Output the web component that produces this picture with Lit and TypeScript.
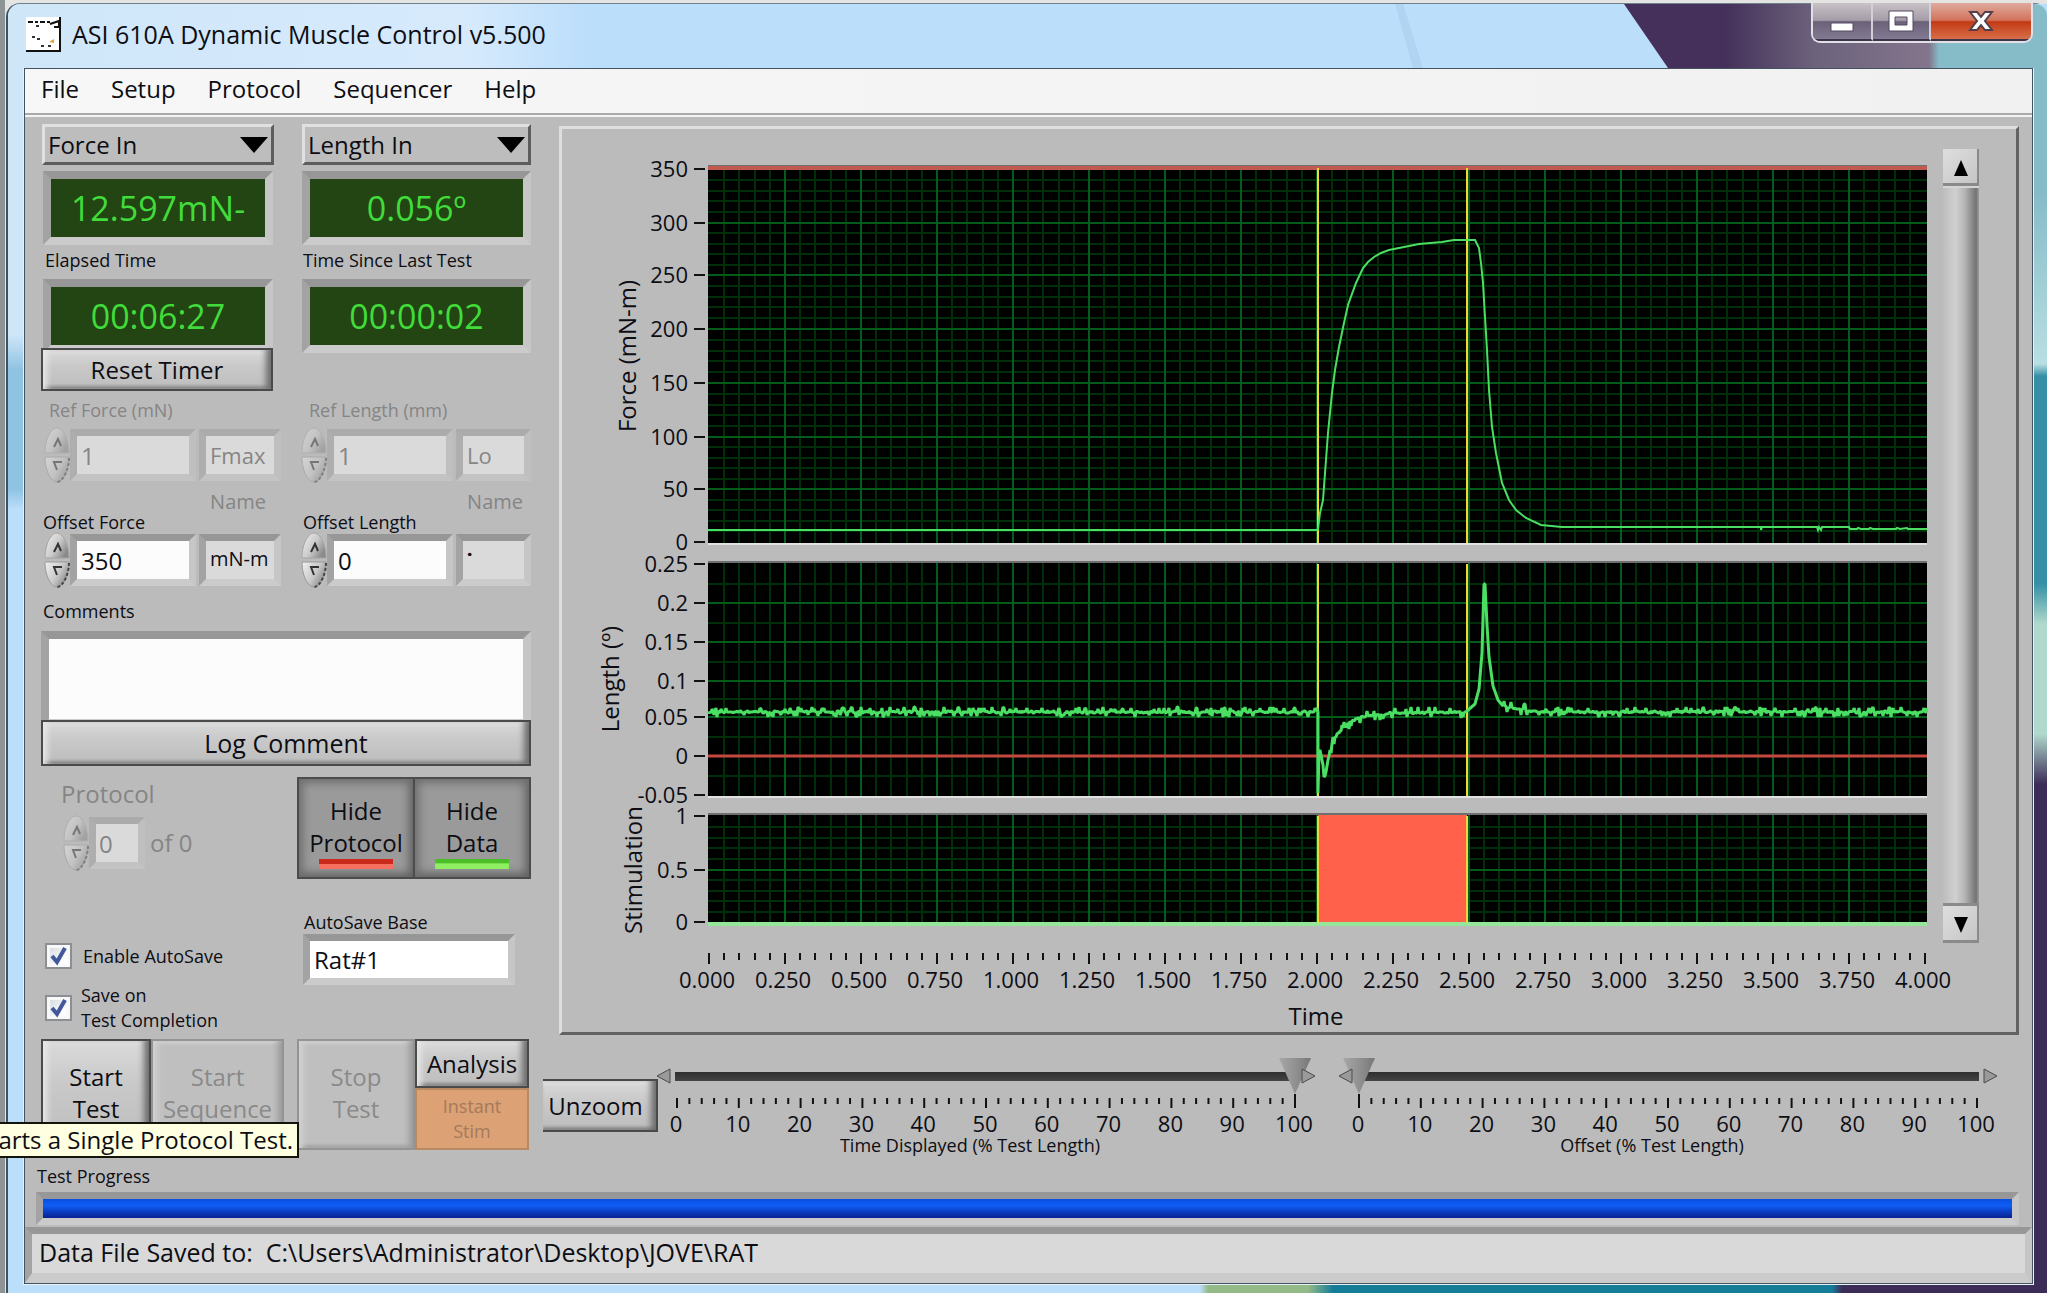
import { LitElement, html, svg, css } from "lit";
import { customElement, property } from "lit/decorators.js";

const range = (n: number) => Array.from({ length: n }, (_, i) => i);

/** Small repeatable generator used for the sensor noise on the traces. */
function noise(seed: number) {
  let s = seed;
  return () => {
    s = (s * 1103515245 + 12345) % 2147483648;
    return s / 2147483648;
  };
}

const PLOT_LEFT = 709;
const PLOT_RIGHT = 1928;
const BASE = 712;

const secondsToX = (t: number) => 710 + t * 304;

type Tick = { y: number; text?: string };
type Plot = { name: string; nameX: number; nameY: number; top: number; bottom: number; major: Tick[]; minor: number[] };

function between(ys: number[], parts: number) {
  const out: number[] = [];
  for (let i = 0; i < ys.length - 1; i++)
    for (let k = 1; k < parts; k++) out.push(Math.round(ys[i] + ((ys[i + 1] - ys[i]) * k) / parts));
  return out;
}

function plot(name: string, nameX: number, nameY: number, top: number, bottom: number, marks: [string, number][], parts: number): Plot {
  return {
    name, nameX, nameY, top, bottom,
    major: marks.map(([text, y]) => ({ text, y })),
    minor: between(marks.map(([, y]) => y), parts),
  };
}

const PLOTS: Plot[] = [
  plot("Force (mN-m)", 637, 356, 166, 543,
    [["350", 169], ["300", 223], ["250", 275], ["200", 329], ["150", 383], ["100", 437], ["50", 489], ["0", 542]], 5),
  plot("Length (º)", 620, 679, 562, 796,
    [["0.25", 564], ["0.2", 603], ["0.15", 642], ["0.1", 681], ["0.05", 717], ["0", 756], ["-0.05", 795]], 2),
  plot("Stimulation", 643, 870, 814, 923, [["1", 816], ["0.5", 870], ["0", 922]], 5),
];

const FORCE =
  "709,530 1318,530 1319,529 1321,513 1324,500 1329,433 1333,393 1336,370 1340,347 1345,323 1349,305 1357,283 1364,268 " +
  "1369,262 1375,257 1382,253 1390,250 1405,247 1420,244 1443,242 1455,240 1476,240 1480,248 1482,263 1484,283 1486,317 " +
  "1488,350 1490,390 1493,427 1497,453 1503,483 1510,500 1517,510 1527,518 1542,525 1563,527 1762,527 1762,530 1763,527 " +
  "1818,527 1819,530 1820,527 1822,530 1823,527 1850,527 1851,529 1858,529 1859,528 1862,529 1870,529 1871,528 1874,529 " +
  "1897,529 1898,528 1901,529 1908,528 1909,529 1928,529";

function lengthTrace() {
  const r = noise(7);
  const pts: string[] = [];
  const anchors: [number, number][] = [
    [1319, BASE], [1319, 793], [1320, 752], [1321, 750], [1323, 760], [1326, 776], [1331, 750], [1336, 737], [1344, 728],
    [1354, 720], [1367, 716], [1392, 713], [1466, BASE], [1468, 711], [1476, 704], [1480, 689], [1483, 653],
    [1485, 584], [1486, 584], [1488, 625], [1490, 657], [1494, 686], [1499, 700], [1504, 706], [1519, 709], [1540, BASE],
  ];
  const put = (x: number, y: number, amp: number) => {
    const v = r();
    pts.push(`${x},${Math.round(y + (v < 0.12 ? -1 : v > 0.88 ? 1 : 0) * amp + (r() - 0.5) * 2)}`);
  };
  for (let x = PLOT_LEFT; x < 1319; x += 1) put(x, BASE, 4);
  for (let i = 0; i < anchors.length - 1; i++) {
    const [x0, y0] = anchors[i];
    const [x1, y1] = anchors[i + 1];
    const amp = (x0 >= 1321 && x0 < 1466) || x0 >= 1504 ? 5 : 0;
    pts.push(`${x0},${y0}`);
    if (amp) for (let x = x0 + 1; x < x1; x++) put(x, y0 + ((y1 - y0) * (x - x0)) / (x1 - x0), amp);
  }
  for (let x = 1540; x <= PLOT_RIGHT; x += 1) put(x, BASE, 4);
  return pts.join(" ");
}

const LENGTH = lengthTrace();

@customElement("test-chart")
export class TestChart extends LitElement {
  static styles = css`
    :host { display: block; min-width: 0; }
    svg { display: block; width: 100%; height: auto; overflow: visible; font-family: "Open Sans", "Noto Sans", sans-serif; font-size: 22px; }
    text { fill: #0d0d14; }
    .name { font-size: 24px; text-anchor: middle; }
    .mid { text-anchor: middle; }
    .end { text-anchor: end; }
    .tick { stroke: #111; stroke-width: 2; }
    .minor { stroke: #002e08; stroke-width: 2; }
    .major { stroke: #045c1a; stroke-width: 2; }
    .edge { stroke: #e2e2e2; stroke-width: 2; }
    .shade { stroke: #6f6f6f; stroke-width: 2; }
    .limit { fill: #c05a50; }
    .zero { stroke: #c5483e; stroke-width: 3; }
    .trace { fill: none; stroke: #4ade62; stroke-width: 2; }
    .noisy { stroke-width: 3; stroke-linejoin: bevel; }
    .cursor { stroke: #f3d63c; stroke-width: 2; }
    .stim { fill: #ff614b; }
    .rest { fill: #96e69a; }
  `;

  private grid(p: Plot) {
    return svg`
      <rect x=${PLOT_LEFT} y=${p.top} width=${PLOT_RIGHT - PLOT_LEFT} height=${p.bottom - p.top}></rect>
      ${range(81).filter((i) => i % 5).map((i) => {
        const x = Math.round(secondsToX(i * 0.05));
        return svg`<line class="minor" x1=${x} x2=${x} y1=${p.top} y2=${p.bottom}></line>`;
      })}
      ${p.minor.map((y) => svg`<line class="minor" x1=${PLOT_LEFT} x2=${PLOT_RIGHT} y1=${y} y2=${y}></line>`)}
      ${range(15).map((i) => {
        const x = secondsToX((i + 1) * 0.25);
        return svg`<line class="major" x1=${x} x2=${x} y1=${p.top} y2=${p.bottom}></line>`;
      })}
      ${p.major.slice(1, -1).map((t) => svg`<line class="major" x1=${PLOT_LEFT} x2=${PLOT_RIGHT} y1=${t.y} y2=${t.y}></line>`)}
      ${p.major.map((t) => svg`
        <line class="tick" x1="695" x2="706" y1=${t.y} y2=${t.y}></line>
        <text class="end" x="689" y=${t.y + 8}>${t.text}</text>`)}
      <line class="shade" x1=${PLOT_LEFT} x2=${PLOT_RIGHT} y1=${p.top} y2=${p.top}></line>
      <line class="edge" x1=${PLOT_LEFT} x2=${PLOT_RIGHT} y1=${p.bottom + 1} y2=${p.bottom + 1}></line>
      <text class="name" transform="translate(${p.nameX} ${p.nameY}) rotate(-90)">${p.name}</text>
    `;
  }

  render() {
    return html`
      <svg viewBox="563 129 1380 903" role="img" aria-label="Force, Length and Stimulation against Time">
        ${PLOTS.map((p) => this.grid(p))}
        <rect class="limit" x="709" y="166" width="1219" height="4"></rect>
        <line class="zero" x1="709" x2="1928" y1="756" y2="756"></line>
        <rect class="stim" x="1319" y="815" width="149" height="107"></rect>
        <rect class="rest" x="709" y="922" width="1219" height="4"></rect>
        ${[1319, 1468].map((x) => PLOTS.map((p) => svg`<line class="cursor" x1=${x} x2=${x} y1=${p.top + 2} y2=${p.bottom}></line>`))}
        <polyline class="trace" points=${FORCE}></polyline>
        <polyline class="trace noisy" points=${LENGTH}></polyline>
        ${range(81).map((i) => {
          const x = Math.round(secondsToX(i * 0.05));
          return svg`<line class="tick" x1=${x} x2=${x} y1="953" y2=${i % 5 ? 960 : 964}></line>`;
        })}
        ${range(17).map((i) => svg`<text class="mid" x=${secondsToX(i * 0.25) - 2} y="988">${(i * 0.25).toFixed(3)}</text>`)}
        <text class="name" x="1317" y="1025">Time</text>
      </svg>
    `;
  }
}

@customElement("scale-slider")
export class ScaleSlider extends LitElement {
  @property() label = "";
  @property({ type: Number }) value = 0;

  static styles = css`
    :host { display: block; flex: 1; min-width: 0; color: #0d0d14; }
    .rail { position: relative; display: flex; align-items: center; padding: 0 5px; height: 36px; }
    input {
      appearance: none; flex: 1; min-width: 0; width: 100%; height: 36px; margin: 0; background: none;
    }
    input::-webkit-slider-runnable-track {
      height: 36px;
      background: linear-gradient(#2f2f2f, #444) center / calc(100% - 28px) 9px no-repeat;
    }
    input::-webkit-slider-thumb {
      appearance: none; width: 32px; height: 36px; border: 0;
      background: linear-gradient(90deg, #a8a8a8, #8c8c8c 60%, #777);
      clip-path: polygon(0 0, 100% 0, 50% 100%);
    }
    .end { position: absolute; top: 10px; width: 15px; height: 16px; }
    .start { left: 0; }
    .finish { right: 0; }
    .end path { fill: #9a9a9a; stroke: #4a4a4a; stroke-width: 1; }
    .ticks { display: block; width: calc(100% - 42px); height: 14px; margin: 0 21px; overflow: visible; stroke: #111; stroke-width: 2; }
    .numbers { display: flex; justify-content: space-between; margin: 3px 22px 0 20px; font-size: 22px; line-height: 24px; }
    .numbers span { display: flex; justify-content: center; width: 0; }
    label { display: block; padding-right: 32px; text-align: center; font-size: 18px; line-height: 20px; }
  `;

  render() {
    return html`
      <div class="rail">
        <input id="range" type="range" min="0" max="100" .value=${String(this.value)} />
        <svg class="end start" viewBox="0 0 15 16" aria-hidden="true"><path d="M14 1V15L1 8Z"></path></svg>
        <svg class="end finish" viewBox="0 0 15 16" aria-hidden="true"><path d="M1 1V15L14 8Z"></path></svg>
      </div>
      <svg class="ticks" aria-hidden="true">
        ${range(51).map((i) => svg`<line x1="${i * 2}%" x2="${i * 2}%" y1=${i === this.value / 2 ? 0 : 4} y2=${i % 5 ? 10 : 14}></line>`)}
      </svg>
      <div class="numbers">${range(11).map((i) => html`<span>${i * 10}</span>`)}</div>
      <label for="range">${this.label}</label>
    `;
  }
}

@customElement("app-root")
export class AppRoot extends LitElement {
  static styles = css`
    :host { display: block; color: #0d0d14; font-family: "Open Sans", "Noto Sans", sans-serif; font-size: 24px; line-height: 30px; }
    * { box-sizing: border-box; }
    button, input, select, textarea { font: inherit; color: inherit; margin: 0; border-radius: 0; }
    button { padding: 0; }

    .desktop { position: relative; overflow: hidden; min-height: 100vh; display: flex; flex-direction: column; padding: 3px 0 0 6px; background: linear-gradient(90deg, #8e9496 0 5px, #e4e5e3 5px); }
    .window {
      flex: 1; display: flex; flex-direction: column; padding: 0 14px 9px 16px;
      border-left: 2px solid #41525e; border-top: 1px solid #6f7f8b; border-radius: 14px 12px 0 0;
      background:
        linear-gradient(#86bcc8 0 190px, #b8dfe3 360px, #3590a6 372px 580px, #b0d8cc 620px 730px, #3c2d58 780px) right top / 14px 100% no-repeat,
        linear-gradient(90deg, #bbdefb 0 1192px, #94ba88 1200px 1300px, #167d98 1325px 1824px, #3c2d58 1834px) left bottom / 100% 10px no-repeat,
        linear-gradient(#cfe6f8 0 330px, #8fc3e2 366px 485px, #bbdefb 505px) left top / 18px 100% no-repeat,
        #bbdefb;
    }

    .titlebar { position: relative; display: flex; align-items: flex-start; height: 64px; margin: 0 -14px 0 -16px; padding-left: 18px; border-radius: 12px 0 0 0; background: linear-gradient(90deg, #cfe6f9, #d6eafc 460px, #bbdefb 580px); }
    .titlebar::before {
      content: ""; position: absolute; right: 0; top: 0; width: 423px; height: 64px; border-top-right-radius: 12px;
      background: linear-gradient(90deg, #44305a 0 100px, #6c627c 190px, #83758c 305px, #86bcc8 315px);
      clip-path: polygon(0 0, 100% 0, 100% 100%, 44px 100%);
    }
    .titlebar::after {
      content: ""; position: absolute; right: 624px; top: 0; width: 28px; height: 64px;
      background: #a9cdeb; opacity: 0.6; clip-path: polygon(0 0, 8px 0, 100% 100%, 18px 100%);
    }
    .appicon { width: 36px; height: 36px; margin: 13px 10px 0 0; }
    .title { margin: 0; font-size: 25px; font-weight: 400; line-height: 60px; }
    .caption { position: relative; z-index: 1; display: flex; margin: -1px 14px 0 auto; border: 2px solid #e3dfe6; border-top: 0; border-radius: 0 0 9px 9px; overflow: hidden; }
    .caption button { height: 38px; display: grid; place-items: center; border: 0; border-bottom: 2px solid #3c3448; border-right: 2px solid #d5ced8; background: linear-gradient(#c9c2c6 0, #a59ca8 48%, #6b6279 52%, #827a92); }
    .caption .min { width: 60px; }
    .caption .max { width: 58px; }
    .caption .close { width: 100px; border-right: 0; background: linear-gradient(#dfaa9c 0, #d2735c 48%, #c23a15 52%, #d86f48); }

    .client { flex: 1; display: flex; flex-direction: column; border: 1px solid #44535f; outline: 1px solid #e6f1f8; background: #bbb; }
    .menubar { display: flex; gap: 32px; padding: 0 16px; background: linear-gradient(90deg, #f7f7f7, #f1f1f1); border-bottom: 2px solid #a9a9a9; }
    .menubar button { padding: 0 0 5px; border: 0; background: none; height: 44px; }
    .rule { height: 2px; background: #f3f3f3; }

    .main { display: grid; grid-template-columns: 490px minmax(0, 1fr); column-gap: 12px; padding-left: 16px; }

    .readouts { display: grid; grid-template-columns: 240px 230px; column-gap: 20px; padding-top: 7px; }
    .narrow { width: 232px; }
    .pick { position: relative; height: 41px; margin-left: 1px; }
    .pick select { appearance: none; width: 100%; height: 41px; padding: 0 3px; line-height: 30px; border: 3px solid; border-color: #e0e0e0 #5d5d5d #5d5d5d #e0e0e0; background: #bdbdbd; }
    .pick svg { position: absolute; right: 6px; top: 13px; width: 28px; height: 16px; pointer-events: none; }
    .well { border: 7px solid; border-color: #979797 #c6c6c6 #cbcbcb #a3a3a3; }
    .lcd { display: block; height: 74px; margin: 6px 0 0 1px; border-width: 8px; background: #234413; color: #41dc3a; font-size: 34px; line-height: 58px; text-align: center; white-space: nowrap; overflow: hidden; }
    .lcd.narrow { margin-left: 2px; width: 230px; }
    .small { font-size: 18px; line-height: 24px; }
    .dim { color: #858585; }
    .lcdname { display: block; padding: 3px 0 0 4px; height: 28px; }
    .readouts .lcdname + .lcdname { padding-left: 2px; }
    .raised { border: 2px solid #4a4a4a; background: linear-gradient(#dadada, #c9c9c9 40%, #bdbdbd); box-shadow: inset 8px 0 6px -4px #e8e8e8, inset -8px 0 6px -3px #6d6d6d, inset 0 4px 3px -1px #e4e4e4, inset 0 -4px 3px -1px #8b8b8b; }
    .raised:disabled { border-color: #949494; color: #8a8a8a; box-shadow: inset 8px 0 6px -4px #d2d2d2, inset -8px 0 6px -4px #9a9a9a, inset 0 4px 3px -1px #cfcfcf, inset 0 -4px 3px -1px #a3a3a3; background: #bfbfbf; }
    .reset { height: 43px; margin-top: -5px; z-index: 1; }
    .reflabel { padding: 7px 0 0 8px; }
    .fields { display: flex; align-items: center; padding-top: 5px; }
    .tight { padding-top: 0; }
    .first { padding-left: 3px; }
    .spin { flex: none; width: 26px; height: 56px; }
    .spin.off { opacity: 0.5; }
    .num { width: 126px; height: 52px; padding: 0 4px; background: #fcfcfc; }
    .num:disabled, .unit { background: #dadada; }
    .num:disabled { color: #858585; }
    .well.off { border-color: #ababab #bfbfbf #c3c3c3 #aeaeae; }
    .unit { flex: 1; min-width: 0; margin-left: 3px; height: 52px; padding: 0 4px; font-size: 22px; }
    .unit.sm { padding: 0 4px 4px; font-size: 20px; }
    .unit.dot { font-weight: 700; }
    .namecap { padding: 9px 15px 0 0; text-align: right; font-size: 20px; line-height: 20px; }
    .namecap.right { padding-right: 8px; }
    .offlabel { line-height: 20px; padding-left: 2px; }

    .commentlabel { display: block; padding: 11px 0 0 2px; }
    .comments { display: block; width: 100%; height: 96px; margin-top: 8px; border-width: 8px; background: #fcfcfc; resize: none; }
    .log { display: block; position: relative; width: 100%; height: 46px; margin-top: -7px; font-size: 25px; }

    .modes { display: grid; grid-template-columns: 256px 234px; height: 102px; margin-top: 11px; }
    .protocol { padding: 2px 0 0 20px; }
    .count { display: flex; align-items: center; padding: 6px 0 0 2px; }
    .count .num { width: 56px; padding: 0 3px; margin-right: 5px; }
    .toggles { display: flex; border: 2px solid #4c4c4c; }
    .toggles button { flex: 1; border: 0; padding-top: 7px; line-height: 32px; background: #9a9a9a; box-shadow: inset 8px 8px 8px -4px #6f6f6f, inset -8px -8px 8px -4px #626262; }
    .toggles button + button { border-left: 2px solid #4c4c4c; }
    .led { display: block; width: 74px; height: 10px; margin: 0 auto; }
    .red { background: linear-gradient(#c92a1c 45%, #f7705f 55%); }
    .green { background: linear-gradient(#4bbd27 35%, #8fee62 50%); }

    .saving { display: grid; grid-template-columns: 262px 212px; padding-top: 31px; }
    .checks { padding: 33px 0 0 4px; }
    .check { display: flex; align-items: center; gap: 11px; margin-bottom: 14px; font-size: 18px; line-height: 25px; }
    .check.two { margin-bottom: 6px; gap: 9px; }
    .check input { appearance: none; flex: none; width: 27px; height: 26px; border: 2px solid #8b8f94; background: linear-gradient(135deg, #cfd6dd, #fdfdfd 70%); box-shadow: inset 0 0 0 3px #f8f8f8; }
    .box { position: relative; display: flex; }
    .box svg { position: absolute; left: 5px; top: 3px; width: 18px; height: 20px; pointer-events: none; }
    .base label { display: block; padding-left: 1px; }
    .base input { width: 212px; height: 51px; padding: 0 4px; background: #fff; }

    .actions { position: relative; display: grid; grid-template-columns: 110px 133px 13px 118px 114px; height: 111px; }
    .actions button { padding-bottom: 4px; line-height: 32px; }
    .stack { display: flex; flex-direction: column; }
    .actions .stack button { padding-bottom: 0; }
    .stack .raised { height: 49px; }
    .actions .stim { flex: 1; border: 2px solid #b98a62; background: #dca175; color: #a5795a; font-size: 18px; line-height: 25px; }
    .gap { grid-column: 4; }
    .tip { position: absolute; z-index: 2; right: 232px; top: 83px; padding: 0 4px; border: 2px solid #14140c; background: #ffffe1; line-height: 32px; white-space: nowrap; }

    .right { padding-top: 9px; }
    .panel { display: flex; align-items: flex-start; margin: 0 13px 0 16px; border: 3px solid; border-color: #dedede #626262 #626262 #dedede; }
    .panel test-chart { flex: 1; }
    .scroll { flex: none; display: flex; flex-direction: column; width: 36px; height: 794px; margin: 20px 37px 0 1px; }
    .scroll button { height: 37px; display: grid; place-items: center; border: 0; background: linear-gradient(135deg, #dedede, #c4c4c4); box-shadow: inset -2px -3px 0 #8a8a8a; }
    .bar { flex: 1; border-top: 2px solid #d5d5d5; border-bottom: 3px solid #8b8b8b; background: linear-gradient(90deg, #bdbdbd, #d0d0d0 35%, #b5b5b5 60%, #737373 92%, #a0a0a0); }
    .zoomrow { display: flex; align-items: flex-start; padding-right: 34px; }
    .unzoom { flex: none; width: 115px; height: 53px; margin: 44px -2px 0 0; padding-right: 8px; border-left: 0; box-shadow: inset -8px 0 6px -3px #6d6d6d, inset 0 4px 3px -1px #e4e4e4, inset 0 -4px 3px -1px #8b8b8b; }
    .zoomrow scale-slider { margin-top: 23px; }
    .zoomrow scale-slider + scale-slider { margin-left: 22px; }

    .progresslabel { display: block; padding: 9px 0 0 12px; }
    .progress { margin: 4px 13px 0 11px; height: 33px; display: flex; }
    .progress progress { appearance: none; flex: 1; width: 100%; height: 19px; border: 0; }
    .progress progress::-webkit-progress-bar { background: #8d8d8d; }
    .progress progress::-webkit-progress-value { background: linear-gradient(#0b4fe0, #0f5df6 35%, #0a3fc4 65%, #062290); }
    .status { flex: 1; margin: 2px 0 0; padding: 0 7px; min-height: 54px; border-bottom-width: 10px; background: #d9d9d9; font-size: 25px; line-height: 37px; white-space: pre; }
  `;

  private spinner(off: boolean) {
    return html`<svg class="spin ${off ? "off" : ""}" viewBox="0 0 26 56" aria-hidden="true">
      <defs>
        <linearGradient id="knob" x1="0" x2="1" y1="0" y2="0.6">
          <stop offset="0" stop-color="#f0f0f0"></stop><stop offset="0.6" stop-color="#c9c9c9"></stop><stop offset="1" stop-color="#8a8a8a"></stop>
        </linearGradient>
      </defs>
      <path d="M1 26C1 12 7 1 13 1S25 12 25 26Z" fill="url(#knob)" stroke="#a5a5a5"></path>
      <path d="M1 30C1 44 7 55 13 55S25 44 25 30Z" fill="url(#knob)" stroke="#999"></path>
      <path d="M10 20L14 12L17 19" fill="none" stroke="#333" stroke-width="2"></path>
      <path d="M18 35H10L13 43" fill="none" stroke="#333" stroke-width="2"></path>
      <path d="M25 31C25 42 19 55 13 55" fill="none" stroke="#444" stroke-width="2" stroke-dasharray="3 2"></path>
    </svg>`;
  }

  private pick(id: string, text: string, narrow = false) {
    return html`<div class="pick ${narrow ? "narrow" : ""}">
      <select id=${id} aria-label="${text} channel"><option>${text}</option></select>
      <svg viewBox="0 0 28 16" aria-hidden="true"><path d="M0 0H28L14 16Z"></path></svg>
    </div>`;
  }

  private fields(id: string, value: string, unit: string, opts: { off?: boolean; unitClass?: string; first?: boolean }) {
    const off = !!opts.off;
    return html`<div class="fields ${opts.first ? "first" : ""} ${off ? "" : "tight"}">
      ${this.spinner(off)}
      <input id=${id} class="well num ${off ? "off" : ""}" type="text" .value=${value} ?disabled=${off} />
      <input id="${id}-unit" class="well unit ${off ? "off dim" : ""} ${opts.unitClass ?? ""}" type="text" .value=${unit} readonly
        aria-label="${id} name" />
    </div>`;
  }

  private tick() {
    return html`<svg viewBox="0 0 18 20" aria-hidden="true"><path d="M2 10L7 16L15 2" fill="none" stroke="#42579c" stroke-width="4"></path></svg>`;
  }

  render() {
    return html`
      <div class="desktop">
        <div class="window">
          <header class="titlebar">
            <svg class="appicon" viewBox="0 0 36 36" aria-hidden="true">
              <rect width="34" height="34" fill="#fff"></rect>
              <path d="M0 34H34V0" fill="none" stroke="#111" stroke-width="2"></path>
              <path d="M2 5H24" stroke="#111" stroke-width="2" stroke-dasharray="5 2 3 2"></path>
              <path d="M24 7L33 4V10H28" fill="none" stroke="#111" stroke-width="2"></path>
              <path d="M10 9h3M6 20h3M11 22h3M15 29h3M22 29h3" stroke="#333" stroke-width="2"></path>
              <path d="M23 25l5-3v4z" fill="#e0a03c"></path>
            </svg>
            <h1 class="title">ASI 610A Dynamic Muscle Control v5.500</h1>
            <div class="caption">
              <button class="min" aria-label="Minimize">
                <svg width="24" height="26" aria-hidden="true"><rect x="1" y="15" width="22" height="8" fill="#fff" stroke="#544b60"></rect></svg>
              </button>
              <button class="max" aria-label="Maximize">
                <svg width="26" height="22" aria-hidden="true">
                  <path d="M1 1H25V21H1ZM7 7V15H19V7Z" fill="#fff" fill-rule="evenodd" stroke="#544b60"></path>
                </svg>
              </button>
              <button class="close" aria-label="Close">
                <svg width="26" height="22" aria-hidden="true">
                  <path d="M2 2H9L13 7L17 2H24L17 11L24 20H17L13 15L9 20H2L9 11Z" fill="#fff" stroke="#54404c" stroke-width="2"></path>
                </svg>
              </button>
            </div>
          </header>

          <main class="client">
            <nav class="menubar">
              ${["File", "Setup", "Protocol", "Sequencer", "Help"].map((m) => html`<button>${m}</button>`)}
            </nav>
            <div class="rule"></div>

            <div class="main">
              <section class="left">
                <div class="readouts">
                  ${this.pick("force-in", "Force In", true)}
                  ${this.pick("length-in", "Length In")}
                  <output class="well lcd narrow">12.597mN-</output>
                  <output class="well lcd">0.056º</output>
                  <label class="small lcdname" for="elapsed">Elapsed Time</label>
                  <label class="small lcdname" for="since">Time Since Last Test</label>
                  <output id="elapsed" class="well lcd narrow">00:06:27</output>
                  <output id="since" class="well lcd">00:00:02</output>
                  <button class="raised reset narrow">Reset Timer</button>
                  <span></span>
                  <label class="small dim reflabel" for="ref-force">Ref Force (mN)</label>
                  <label class="small dim reflabel" for="ref-length">Ref Length (mm)</label>
                  ${this.fields("ref-force", "1", "Fmax", { off: true, first: true })}
                  ${this.fields("ref-length", "1", "Lo", { off: true })}
                  <label class="dim namecap" for="ref-force-unit">Name</label>
                  <label class="dim namecap right" for="ref-length-unit">Name</label>
                  <label class="small offlabel" for="offset-force">Offset Force</label>
                  <label class="small offlabel" for="offset-length">Offset Length</label>
                  ${this.fields("offset-force", "350", "mN-m", { unitClass: "sm", first: true })}
                  ${this.fields("offset-length", "0", "˙", { unitClass: "dot" })}
                </div>

                <label class="small commentlabel" for="comments">Comments</label>
                <textarea id="comments" class="well comments"></textarea>
                <button class="raised log">Log Comment</button>

                <div class="modes">
                  <div class="protocol dim">
                    <label for="protocol">Protocol</label>
                    <div class="count">
                      ${this.spinner(true)}
                      <input id="protocol" class="well num off" type="text" .value=${"0"} disabled />
                      <span>of 0</span>
                    </div>
                  </div>
                  <div class="toggles">
                    <button>Hide<br />Protocol<span class="led red"></span></button>
                    <button>Hide<br />Data<span class="led green"></span></button>
                  </div>
                </div>

                <div class="saving">
                  <div class="checks">
                    <label class="check"><span class="box"><input type="checkbox" checked />${this.tick()}</span>Enable AutoSave</label>
                    <label class="check two"><span class="box"><input type="checkbox" checked />${this.tick()}</span><span>Save on<br />Test Completion</span></label>
                  </div>
                  <div class="base">
                    <label class="small" for="base">AutoSave Base</label>
                    <input id="base" class="well" type="text" .value=${"Rat#1"} />
                  </div>
                </div>

                <div class="actions">
                  <button class="raised" aria-describedby="tip">Start<br />Test</button>
                  <button class="raised" disabled>Start<br />Sequence</button>
                  <button class="raised gap" disabled>Stop<br />Test</button>
                  <div class="stack">
                    <button class="raised">Analysis</button>
                    <button class="stim" disabled>Instant<br />Stim</button>
                  </div>
                  <div id="tip" class="tip" role="tooltip">Starts a Single Protocol Test.</div>
                </div>
              </section>

              <section class="right">
                <div class="panel">
                  <test-chart></test-chart>
                  <div class="scroll">
                    <button aria-label="Scroll up"><svg width="16" height="16" aria-hidden="true"><path d="M8 0L15 16H1Z"></path></svg></button>
                    <div class="bar"></div>
                    <button aria-label="Scroll down"><svg width="16" height="16" aria-hidden="true"><path d="M8 16L15 0H1Z"></path></svg></button>
                  </div>
                </div>
                <div class="zoomrow">
                  <button class="raised unzoom">Unzoom</button>
                  <scale-slider label="Time Displayed (% Test Length)" .value=${100}></scale-slider>
                  <scale-slider label="Offset (% Test Length)" .value=${0}></scale-slider>
                </div>
              </section>
            </div>

            <label class="small progresslabel" for="progress">Test Progress</label>
            <div class="well progress"><progress id="progress" value="100" max="100"></progress></div>
            <footer class="well status">Data File Saved to:  C:\\Users\\Administrator\\Desktop\\JOVE\\RAT</footer>
          </main>
        </div>
      </div>
    `;
  }
}
